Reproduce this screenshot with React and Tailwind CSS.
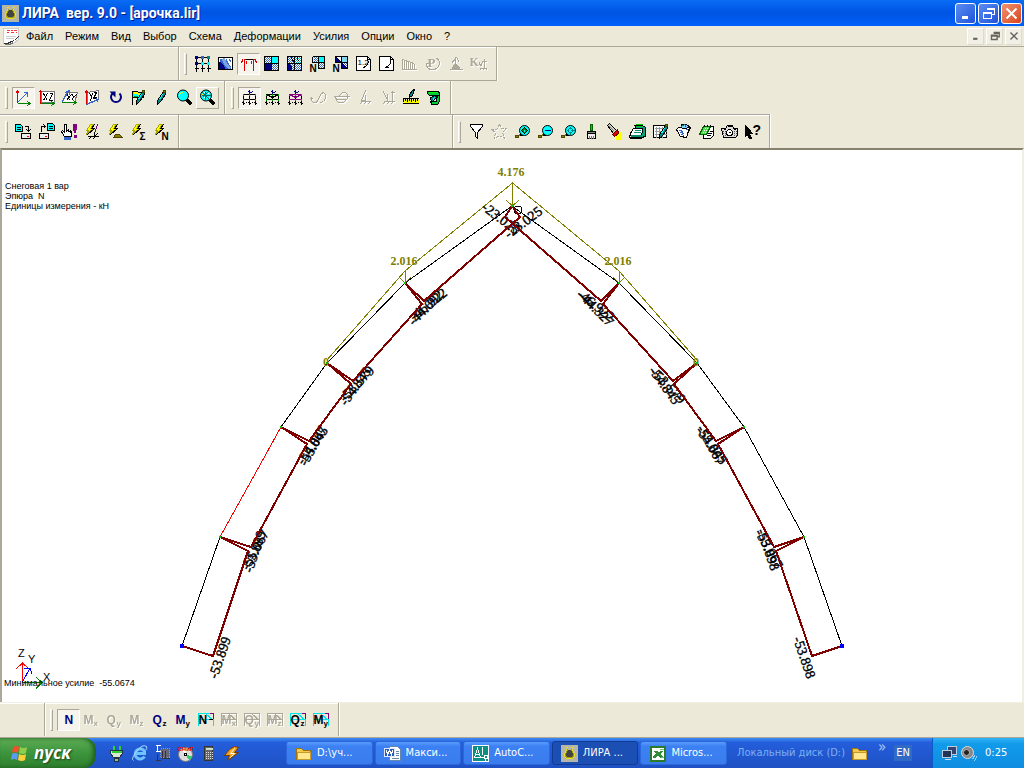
import React, { useState } from "react";

const MENU = ["Файл", "Режим", "Вид", "Выбор", "Схема", "Деформации", "Усилия", "Опции", "Окно", "?"];

const LEFT_NODES = [[512, 206], [405, 283], [327, 363], [281, 427], [220, 537], [182, 646]];
const RIGHT_NODES = [[512, 206], [619, 283], [697, 363], [744, 427], [804, 537], [842, 646]];

const FORCES = [
  { text: "-23.025", x: 498, y: 222, angle: 37 },
  { text: "-23.025", x: 526, y: 226, angle: -37 },
  { text: "-46.922", x: 431, y: 308, angle: -38 },
  { text: "-44.692", x: 429, y: 311, angle: -45 },
  { text: "-53.579", x: 360, y: 387, angle: -46 },
  { text: "-54.845", x: 359, y: 389, angle: -54 },
  { text: "-54.845", x: 316, y: 448, angle: -54 },
  { text: "-55.067", x: 317, y: 448, angle: -61 },
  { text: "-55.067", x: 259, y: 552, angle: -61 },
  { text: "-53.899", x: 259, y: 553, angle: -71 },
  { text: "-53.899", x: 224, y: 659, angle: -71 },
  { text: "-46.922", x: 593, y: 309, angle: 38 },
  { text: "-44.327", x: 593, y: 312, angle: 45 },
  { text: "-53.579", x: 665, y: 389, angle: 46 },
  { text: "-54.845", x: 661, y: 388, angle: 54 },
  { text: "-54.845", x: 708, y: 448, angle: 54 },
  { text: "-55.067", x: 707, y: 447, angle: 61 },
  { text: "-55.067", x: 765, y: 551, angle: 61 },
  { text: "-53.898", x: 764, y: 551, angle: 71 },
  { text: "-53.898", x: 800, y: 659, angle: 71 },
];

// strokes run on whole numbers, the view box is shifted to hit pixel centres
function Svg({ children, size = 17, className = "" }) {
  return (
    <svg
      width={size}
      height={size}
      viewBox="-.5 -.5 17 17"
      fill="none"
      stroke="#000"
      shapeRendering="crispEdges"
      className={`shrink-0 ${className}`}
      aria-hidden="true"
    >
      {children}
    </svg>
  );
}

function Letters({ x, y, size = 10, fill = "#000", children }) {
  return (
    <text x={x} y={y} fontSize={size} fill={fill} stroke="none" fontWeight="bold" fontFamily="Liberation Sans, sans-serif">
      {children}
    </text>
  );
}

const Bolt = () => (
  <g>
    <path d="M6 1h3L6 5h3L2 11l2-4H2z" fill="#ff0" stroke="#a8a800" />
    <path d="M10 1L7 5h3L3 11" />
  </g>
);

const Frame = ({ top = "#008", beam = "#000" }) => (
  <g>
    <path d="M2 5v10M8 5v10M14 5v10M1 14h2M7 14h2M13 14h2M0 13h1M4 13h1M6 13h1M10 13h1M12 13h1M16 13h1" />
    <path d="M2 5h12M2 10h12" stroke={beam} />
    <path d="M8 0v4M6 2h1M10 2h1M7 3h3" stroke={top} />
    <path d="M2 4v2M8 4v2M14 4v2M2 9v2M8 9v2M14 9v2" stroke="#0a0" />
  </g>
);

const Hatch = ({ x, y, w = 7, h = 7, color = "#3a6fc4" }) => (
  <g>
    <rect x={x} y={y} width={w} height={h} fill="#fff" stroke="none" />
    <path
      d={`M${x} ${y + 1}h${w}M${x} ${y + 3}h${w}M${x} ${y + 5}h${w}`}
      stroke={color}
      strokeDasharray="1 1"
    />
    <path d={`M${x + 1} ${y + 2}h${w - 1}M${x + 1} ${y + 4}h${w - 1}M${x + 1} ${y + 6}h${w - 1}`} stroke={color} strokeDasharray="1 1" />
  </g>
);

const Lens = ({ children }) => (
  <g>
    <path d="M10 10l5 5" stroke="#000" strokeWidth="3" />
    <circle cx="6.5" cy="6" r="5.5" fill="#0ff" stroke="#000" shapeRendering="auto" />
    <path d="M3 6q0-3 3-3" stroke="#ff0" />
    {children}
  </g>
);

const ZoomLens = ({ children }) => (
  <g>
    <path d="M6 11l-3 2" stroke="#808000" strokeWidth="2" />
    <path d="M1 12h3v2H1z" fill="#808000" stroke="#554400" />
    <circle cx="10" cy="7" r="5" fill="#0ff" stroke="#000" shapeRendering="auto" />
    <path d="M6 10v2h2" />
    {children}
  </g>
);

const Pen = ({ x = 0 }) => (
  <g transform={`translate(${x} 0)`}>
    <path d="M10 2h2v3L7 12l-3 3v-4z" fill="#088" />
    <path d="M9 5L6 10" stroke="#0ff" />
    <path d="M10 1h2v2h-2z" fill="#808000" stroke="#440" />
  </g>
);

const ICONS = {
  scheme: (
    <g>
      <path d="M2 2v14M8 2v14M14 2v14M2 2h12M2 8h12M0 13h4M6 13h4M12 13h4" />
      <path d="M1 1h2v2H1zM1 7h2v2H1z" stroke="#008" fill="#008" />
      <path d="M7 1h2v2H7z" stroke="#36c" fill="#36c" />
      <path d="M13 1h2v2h-2z" stroke="#088" fill="#088" />
      <path d="M7 7h2v2H7zM13 7h2v2h-2z" stroke="#0ff" fill="#0ff" />
    </g>
  ),
  iso: (
    <g>
      <rect x="1" y="2" width="14" height="12" fill="#fff" />
      <path d="M2 3h4l8 10H2z" fill="#36c" stroke="none" />
      <path d="M6 3q1 6 7 10" stroke="#7aa5e0" strokeWidth="3" />
      <path d="M2 7q4 1 5 6H2z" fill="#000080" stroke="#000080" />
      <path d="M9 3q0 5 5 9M12 3q0 2 2 4" stroke="#36c" />
      <rect x="1" y="2" width="14" height="12" />
    </g>
  ),
  epure: (
    <g>
      <path d="M5 4h7" />
      <path d="M2 3v3M15 3v3M3 4h2M12 4h2M4 4v11M13 4v11M6 5v3M11 5v3M1 5v2M16 5v2" stroke="#e00000" />
    </g>
  ),
  mosaic: (
    <g>
      <Hatch x={1} y={1} />
      <rect x="8" y="1" width="7" height="7" fill="#0ff" stroke="none" />
      <Hatch x={8} y={8} />
      <rect x="1" y="8" width="7" height="7" fill="#000080" stroke="none" />
      <path d="M1 1h14v14H1zM8 1v14M1 8h14" />
    </g>
  ),
  mosaicIso: (
    <g>
      <Hatch x={1} y={1} />
      <Hatch x={8} y={1} color="#0bb" />
      <Hatch x={8} y={8} />
      <Hatch x={1} y={8} />
      <path d="M1 8q5 1 5 7H1z" fill="#000080" stroke="none" />
      <path d="M1 1h14v14H1zM8 1v14M1 8h14M5 1q0 4 3 5M11 1q0 4 1 5" />
    </g>
  ),
  mosaicN: (
    <g>
      <Hatch x={4} y={1} w={6} h={6} />
      <rect x="9" y="1" width="6" height="6" fill="#0ff" stroke="none" />
      <Hatch x={9} y={7} w={6} h={6} />
      <path d="M3 1h12v12H9M3 1v6h12M9 1v12" />
      <Letters x={0} y={16}>N</Letters>
    </g>
  ),
  isoN: (
    <g>
      <rect x="3" y="1" width="6" height="6" fill="#000080" stroke="none" />
      <path d="M3 1h6v6z" fill="#fff" stroke="none" />
      <rect x="9" y="1" width="6" height="6" fill="#7fd7f0" stroke="none" />
      <Hatch x={9} y={7} w={6} h={6} />
      <path d="M9 7v6h6z" fill="#000080" stroke="none" />
      <path d="M3 1h12v12H9M3 1v6h12M9 1v12M3 1l6 6" />
      <Letters x={0} y={16}>N</Letters>
    </g>
  ),
  sheetNum: (
    <g>
      <path d="M1 1h11l3 3v11H1z" fill="#fff" />
      <path d="M12 4q2 4-2 7l-2 1M12 1v3h3" />
      <text x="2" y="9" fontSize="8" fill="#000" stroke="none" fontFamily="Liberation Sans, sans-serif">1.2</text>
    </g>
  ),
  sheet: (
    <g>
      <path d="M1 1h11l3 3v11H1z" fill="#fff" />
      <path d="M12 4q2 5-5 8M12 1v3h3M7 12h3" />
    </g>
  ),
  bars: <path d="M1 3v11h14M3 4v10M5 5v9M7 6v8M9 7v7M11 7v7M13 8v6M1 4l12 4" stroke="#aca899" />,
  rotP: (
    <g stroke="#aca899">
      <path d="M2 8q0 6 6 6t7-6q0-4-3-5M1 8h3l2 2" />
      <text x="3" y="11" fontSize="13" fill="#aca899" stroke="none" fontWeight="bold" fontFamily="Liberation Serif, serif">P</text>
    </g>
  ),
  scaleForce: (
    <g stroke="#aca899">
      <path d="M4 8l5-6 3 5M8 1v6M2 14h13" />
      <path d="M5 12l3-4 4 4v2H5z" fill="#aca899" />
    </g>
  ),
  ku: (
    <g stroke="#aca899">
      <text x="-1" y="10" fontSize="12" fill="#aca899" stroke="none" fontWeight="bold" fontFamily="Liberation Serif, serif">K</text>
      <path d="M9 6v3l2 1 1-4M14 3v9M12 6h5M9 13h8M9 15l2-2M12 15l2-2M15 15l2-2" />
    </g>
  ),
  axes: (
    <g>
      <path d="M2 1v12M0 4l2-3 2 3" stroke="#e00000" />
      <path d="M2 13L12 3M8 3h4v4" stroke="#36c" />
      <path d="M2 14h13M12 12l3 2-3 2" stroke="#008000" />
    </g>
  ),
  xz: (
    <g>
      <rect x="3" y="2" width="13" height="11" fill="#fff" stroke="#777" />
      <path d="M2 0v14M0 3l2-2 2 2" stroke="#e00000" />
      <path d="M2 14h14M13 12l3 2-3 2" stroke="#008000" />
      <path d="M5 4l4 7M9 4l-4 7M11 4h3l-3 7h3" />
    </g>
  ),
  xy: (
    <g>
      <path d="M5 3h11l-3 10H1z" fill="#fff" stroke="#777" />
      <path d="M0 13L7 2M4 3l4-2v4" stroke="#36c" />
      <path d="M0 13h15M12 11l3 2-3 2" stroke="#008000" />
      <path d="M6 5l2 6M10 5l-5 6M11 5l1 3 3-3M12 8l-2 3" />
    </g>
  ),
  yz: (
    <g>
      <path d="M3 3l11-2v9L3 14z" fill="#fff" stroke="#777" />
      <path d="M2 1v14M0 4l2-3 2 3" stroke="#e00000" />
      <path d="M2 15l12-5M10 9l4 1-2 3" stroke="#36c" />
      <path d="M5 4l2 3 1-3M7 7l-1 5M9 3h3l-3 6 4-1" />
    </g>
  ),
  rotate: (
    <g stroke="#000080" shapeRendering="auto">
      <path d="M5 4a5 5 0 1 0 7 0" strokeWidth="2" />
      <path d="M2 2h6v6z" fill="#000080" stroke="none" />
    </g>
  ),
  flags: (
    <g>
      <path d="M2 1v14M2 2h4l3 1h4v5l-3 1-3-1H2z" fill="#0ff" />
      <path d="M3 3h3l3 2h3" stroke="#ff0" strokeWidth="2" />
      <path d="M3 7h3l3 1h2" stroke="#0a0" />
      <Pen x={2} />
    </g>
  ),
  pen: <Pen />,
  lens: <Lens />,
  lensNet: (
    <Lens>
      <path d="M3 3l7 7M9 2L3 8M2 6h9M6 2v9" stroke="#066" />
      <path d="M4 3h1M8 4h1M9 8h1M4 8h1" stroke="#fff" />
    </Lens>
  ),
  load1: <Frame />,
  load2: <g><Frame /><path d="M2 5l6 3 6-3" /></g>,
  load3: <g><Frame beam="#800080" /><path d="M2 5l6 3 6-3" stroke="#800080" /></g>,
  wave1: (
    <path d="M1 9v2l2 2h3l5-9 2-1 2 2v4l-2 3-3 1M0 10l1-2 2 2" stroke="#aca899" />
  ),
  wave2: <path d="M0 7h16M2 7l1 4 2 2h5l4-4V5l-2-2H9L5 7M3 10h9" stroke="#aca899" />,
  fix1: <path d="M9 1L5 11h4M9 5v7M4 12h10M3 15l2-2M7 15l2-2M11 15l2-2" stroke="#aca899" />,
  fix2: <path d="M4 2l4 9M8 4v8M13 1v11M11 3h4M4 12h11M3 15l2-2M7 15l2-2M11 15l2-2" stroke="#aca899" />,
  ruler: (
    <g>
      <path d="M10 1l2-1-2 6-3 2v-3z" fill="#088" />
      <path d="M0 10h16v3H0z" fill="#ff0" stroke="none" />
      <path d="M0 9h16M1 9v3M3 9v2M5 9v3M7 9v2M9 9v3M11 9v2M13 9v3M15 9v2" />
      <path d="M0 14h16" />
    </g>
  ),
  palette: (
    <g>
      <path d="M2 2h11l1 2v2H4L2 4z" fill="#0c3" />
      <path d="M12 6h2v6l-2 3H6l-1-3h6z" fill="#0c3" />
      <path d="M3 3h9" stroke="#0f0" />
      <path d="M10 6l-5 2 1 5 5-5z" fill="#088" />
      <path d="M9 8l-2 3" stroke="#0ff" />
    </g>
  ),
  load: (
    <g>
      <path d="M0 1h5l2 2v5H0z" fill="#0ff" />
      <path d="M1 4h4M1 6h4M9 3h4v4M11 6l2 2 2-2" />
      <path d="M6 10h9v5H6z" fill="#eee" />
      <path d="M11 13h2" stroke="red" />
    </g>
  ),
  save: (
    <g>
      <path d="M9 0h5l2 2v5H9z" fill="#0ff" />
      <path d="M10 3h4M10 5h4M3 8V3h4M5 1l2 2-2 2" />
      <path d="M1 10h9v5H1z" fill="#eee" />
      <path d="M6 13h2" stroke="red" />
    </g>
  ),
  hand: (
    <g>
      <path d="M3 1h2v6l5 1v5H3L0 8l1-1 2 2z" fill="#fff" />
      <path d="M5 4v4M7 5v3M9 6v3" />
      <path d="M3 14h6v2H3z" fill="#36c" stroke="#36c" />
      <path d="M12 1h3v4l-1 4h-1l-1-4zM13 12h2v2h-2z" fill="#800080" stroke="#800080" />
    </g>
  ),
  boltFix: (
    <g>
      <Bolt />
      <path d="M13 1l-3 9v3" stroke="#800080" />
      <path d="M3 13h11M4 16l3-3M8 16l3-3M10 8v5l3-3" />
    </g>
  ),
  boltGround: (
    <g>
      <Bolt />
      <path d="M6 14l2-3h4l3 3z" fill="#808000" stroke="#554400" />
    </g>
  ),
  boltSum: <g><Bolt /><Letters x={9} y={16}>Σ</Letters></g>,
  boltN: <g><Bolt /><Letters x={8} y={16}>N</Letters></g>,
  filter: <path d="M2 1h12v2l-5 6v6l-2-2V9L2 3z" fill="#fff" />,
  star: <path d="M8 1l2 4h5l-4 4 2 6-5-3-5 3 1-6-4-3h5z" stroke="#aca899" strokeDasharray="3 1" />,
  zoomIn: <ZoomLens><path d="M10 4l3 3-3 3-3-3z" fill="#080" stroke="#000" /><path d="M10 6v2" stroke="#0ff" /></ZoomLens>,
  zoomOut: <ZoomLens><path d="M7 7h6" stroke="#008" /></ZoomLens>,
  zoomAll: <ZoomLens><circle cx="10" cy="7" r="2" stroke="#008080" /><path d="M10 3v2M10 9v2M6 7h2M12 7h2M10 7h1" stroke="#008080" /></ZoomLens>,
  brush: (
    <g>
      <path d="M7 1h2v6H7z" fill="#0c0" stroke="#060" />
      <path d="M4 8h8v2H4z" fill="#888" />
      <path d="M4 10h8v5H4z" fill="#eee" />
      <path d="M6 12v3M8 12v3M10 12v3" stroke="#777" />
    </g>
  ),
  torch: (
    <g>
      <path d="M9 12l6-4v8H9z" fill="#ff0" stroke="none" />
      <path d="M1 2l2-2 7 7-3 3z" fill="#ccb" />
      <path d="M6 11l5-5 1 4-4 3z" fill="#e00000" stroke="#600" />
      <path d="M3 3l5 5" stroke="#888" />
    </g>
  ),
  book: (
    <g>
      <path d="M5 2h8l3 2v9l-3 1z" fill="#0aa078" />
      <path d="M4 5h9l-1 9H0l1-4z" fill="#fff" />
      <path d="M5 7h6M4 9h7" stroke="#079070" />
      <path d="M1 12h11" stroke="#079070" strokeWidth="2" />
      <path d="M6 1h7M7 3h4" stroke="#0c0" />
      <path d="M0 15h12l4-3" />
    </g>
  ),
  table: (
    <g>
      <path d="M1 2h13v12H1z" fill="#fff" />
      <path d="M2 5h12M2 8h12M2 11h12M4 3v11M7 3v11M10 3v11" stroke="#999" />
      <Pen x={3} />
    </g>
  ),
  papers: (
    <g>
      <path d="M6 1h5l4 3-4 9-7-3z" fill="#8cf" />
      <path d="M3 4l6 1 5-1-3 10-6-1-4-7z" fill="#fff" />
      <path d="M4 7l4 1M5 9l4 1M6 11l3 1M10 6l2 0" stroke="#36c" />
      <path d="M6 3l3-2 2 3" stroke="#088" />
    </g>
  ),
  pad: (
    <g>
      <path d="M7 3h8v9l-3 3H5z" fill="#fff" />
      <path d="M5 3h7l-4 8H1z" fill="#5d5" stroke="#060" />
      <path d="M6 5h4M5 7h4M4 9h4" stroke="#fff" strokeDasharray="1 1" />
      <path d="M6 1v2M9 1v2M12 1v2M11 8h3M9 10h4M8 12h4" />
    </g>
  ),
  camera: (
    <g>
      <path d="M0 5h4l2-3h5l1 3h4v7l-2 2H2z" fill="#ddd" />
      <circle cx="8" cy="9" r="3" fill="#fff" />
      <path d="M7 9h2M2 6h2M12 6h2M6 3h5" />
      <path d="M1 8h3M1 10h3M1 12h3M12 8h3M12 10h3M12 12h3" stroke="#555" strokeDasharray="1 1" />
    </g>
  ),
  help: (
    <g>
      <path d="M1 2v11l2-2 2 4h2l-2-5h3z" fill="#000" />
      <text x="8" y="11" fontSize="14" fill="#000" stroke="none" fontWeight="bold" fontFamily="Liberation Sans, sans-serif">?</text>
    </g>
  ),
};

const VIEW_ROW = ["scheme", "iso", "epure", "mosaic", "mosaicIso", "mosaicN", "isoN", "sheetNum", "sheet", "bars", "rotP", "scaleForce", "ku"];
const PROJECTION_ROW = ["axes", "xz", "xy", "yz", "rotate", "flags", "pen", "lens", "lensNet"];
const LOAD_ROW = ["load1", "load2", "load3", "wave1", "wave2", "fix1", "fix2", "ruler", "palette"];
const FORCE_ROW = ["load", "save", "hand", "boltFix", "boltGround", "boltSum", "boltN"];
const TOOL_ROW = ["filter", "star", "zoomIn", "zoomOut", "zoomAll", "brush", "torch", "book", "table", "papers", "pad", "camera", "help"];
const DISABLED = ["bars", "rotP", "scaleForce", "ku", "wave1", "wave2", "fix1", "fix2", "star"];

const COMPONENTS = [
  { main: "N", sub: "" },
  { main: "M", sub: "x", off: true },
  { main: "Q", sub: "y", off: true },
  { main: "M", sub: "z", off: true },
  { main: "Q", sub: "z" },
  { main: "M", sub: "y" },
  { main: "N", sub: "", framed: true },
  { main: "M", sub: "x", framed: true, off: true },
  { main: "Q", sub: "y", framed: true, off: true },
  { main: "M", sub: "z", framed: true, off: true },
  { main: "Q", sub: "z", framed: true },
  { main: "M", sub: "y", framed: true },
];

function ToolButton({ label, pressed, raised, disabled, onClick, children }) {
  let look = "border-transparent";
  if (pressed) look = "border-t-[#aca899] border-l-[#aca899] border-r-white border-b-white bg-[#f6f4ec]";
  else if (raised) look = "border-t-white border-l-white border-r-[#aca899] border-b-[#aca899]";
  return (
    <button
      type="button"
      aria-label={label}
      aria-pressed={pressed}
      disabled={disabled}
      onClick={onClick}
      className={`flex h-[22px] w-[23px] shrink-0 items-center justify-center border pb-px ${look}`}
    >
      {children}
    </button>
  );
}

function Grip() {
  return <span className="mr-1 h-[22px] w-[3px] shrink-0 border-y border-r border-l border-t-white border-r-[#aca899] border-b-[#aca899] border-l-white" />;
}

function Band({ children, className = "" }) {
  return (
    <div className={`flex shrink-0 items-center border-r border-r-[#aca899] shadow-[1px_0_0_#fff,inset_0_1px_0_#fff] ${className}`}>
      {children}
    </div>
  );
}

function IconBand({ names, pressed, raised, className }) {
  const [active, setActive] = useState(pressed);
  return (
    <Band className={className}>
      <Grip />
      {names.map((name) => {
        const off = DISABLED.includes(name);
        return (
          <ToolButton key={name} label={name} pressed={active === name} raised={raised === name} disabled={off} onClick={() => pressed && setActive(name)}>
            <Svg className={off ? "drop-shadow-[1px_1px_0_#fff]" : ""}>{ICONS[name]}</Svg>
          </ToolButton>
        );
      })}
    </Band>
  );
}

function ComponentBand() {
  const [active, setActive] = useState(0);
  return (
    <Band className="pr-[5px] pl-[5px]">
      <Grip />
      {COMPONENTS.map((item, index) => {
        const base = item.framed ? "#000" : "#000080";
        const color = item.off ? "#aca899" : base;
        return (
          <ToolButton key={index} label={item.main + item.sub} pressed={active === index} disabled={item.off} onClick={() => setActive(index)}>
            <Svg className={item.off ? "drop-shadow-[1px_1px_0_#fff]" : ""}>
              {item.framed && (
                <g stroke={item.off ? "#aca899" : "#00e5e5"}>
                  <path d="M0 14V2h15v12M0 8h15M7 2l8 7" />
                  <path d="M11 2h4v5" stroke={item.off ? "#aca899" : "#800080"} />
                </g>
              )}
              <Letters x={item.sub || item.framed ? 0 : 4} y={12} size={12} fill={color}>{item.main}</Letters>
              <Letters x={10} y={14} size={8} fill={item.off ? "#aca899" : "#000"}>{item.sub}</Letters>
              {item.framed && !item.sub && <path d="M10 8h4" stroke="#000" />}
            </Svg>
          </ToolButton>
        );
      })}
    </Band>
  );
}

function LyreIcon({ size = 17 }) {
  return (
    <Svg size={size}>
      <rect x="0" y="0" width="16" height="16" fill="#b5b5a8" stroke="#b5b5a8" />
      <path d="M5 4h6l1 7-2 2H6l-2-2z" fill="#444" stroke="none" />
      <path d="M4 2h2M10 2h2M5 3v2L3 8v3l2 2h6l2-2V8l-2-3V3" stroke="#e8e020" />
      <path d="M6 3v2L4 8v3l2 1h4l2-1V8l-2-3V3" stroke="#a09a10" />
    </Svg>
  );
}

function DocumentIcon() {
  return (
    <Svg>
      <path d="M0 0h15v11l-5 4H0z" fill="#fff" stroke="#ccc" />
      <path d="M3 2h3M7 2h2M10 2h3M3 4h2M7 4h3M12 4h1" stroke="#f33" />
      <path d="M2 8h10M2 10h8" stroke="#ccc" />
      <path d="M0 15h4l4-2 3-1 4-4" stroke="#333" />
      <path d="M1 16h5l4-2" stroke="#777" />
    </Svg>
  );
}

function FolderIcon() {
  return (
    <Svg>
      <path d="M1 3h5l2 2h7v9H1z" fill="#f3c94b" stroke="#9c7413" />
      <path d="M2 7h13v7H2z" fill="#ffe88d" stroke="#c79a2c" />
    </Svg>
  );
}

const GLYPHS = {
  min: <path d="M4 12h6" strokeWidth="3" />,
  restore: <path d="M6 3h8v6h-3M3 7h8v6H3zM6 4h8M3 8h8" />,
  close: <path d="M3 3l10 10M13 3L3 13" strokeWidth="2" shapeRendering="auto" />,
};

function TitleBar() {
  return (
    <header className="flex h-[26px] shrink-0 items-center bg-linear-to-b from-[#0a6cf5] via-[#0054e3] to-[#0061fb] pr-[2px] pl-[2px]">
      <LyreIcon />
      <h1 className="ml-[3px] flex-1 whitespace-pre font-[Roboto,sans-serif] text-[14px] leading-4 font-bold text-white [text-shadow:1px_1px_0_#0a1883]">ЛИРА  вер. 9.0 - [арочка.lir]</h1>
      <div className="flex gap-[2px]">
        {["min", "restore", "close"].map((name) => (
          <button
            key={name}
            type="button"
            aria-label={name}
            className={`flex h-[21px] w-[21px] items-center justify-center rounded-[3px] border border-white ${name === "close" ? "bg-linear-to-br from-[#f0936f] to-[#d8400f]" : "bg-linear-to-br from-[#5c8cf2] to-[#1f52d8]"}`}
          >
            <svg width="17" height="17" viewBox="-.5 -.5 17 17" fill="none" stroke="#fff" shapeRendering="crispEdges">{GLYPHS[name]}</svg>
          </button>
        ))}
      </div>
    </header>
  );
}

function MenuBar() {
  return (
    <nav className="flex h-[21px] shrink-0 items-center border-b border-[#aca899] pr-[2px] pl-[3px]">
      <DocumentIcon />
      <div className="flex flex-1">
        {MENU.map((item) => (
          <button key={item} type="button" className="px-[6px] font-['Liberation_Sans',sans-serif] text-[11px] leading-4">{item}</button>
        ))}
      </div>
      <div className="flex gap-[2px]">
        {["min", "restore", "close"].map((name) => (
          <button key={name} type="button" aria-label={`document ${name}`} className="flex h-[17px] w-[17px] items-center justify-center border border-t-white border-r-[#dedbcd] border-b-[#dedbcd] border-l-white bg-[#f1efe6]">
            <svg width="12" height="12" viewBox="-.5 -.5 17 17" fill="none" stroke="#66645a" strokeWidth="2">{GLYPHS[name]}</svg>
          </button>
        ))}
      </div>
    </nav>
  );
}

function Diagram() {
  const points = (list) => list.map((p) => p.join(",")).join(" ");
  return (
    <svg viewBox="2 150 1020 552" className="h-full w-full" fill="none" role="img" aria-label="Эпюра N">
      <g shapeRendering="crispEdges">
        <polyline points={points(LEFT_NODES.slice(0, 4))} stroke="#000" />
        <polyline points={points(LEFT_NODES.slice(3, 5))} stroke="#f00" />
        <polyline points={points(LEFT_NODES.slice(4))} stroke="#000" />
        <polyline points={points(RIGHT_NODES)} stroke="#000" />
        <g stroke="#808000">
          <path d="M327 360L405 271L512.5 183L619 271L697 360" />
          <path d="M512.5 183v23M506 200l6.500 6l6.500-6M405.500 271v12M399 277l6 6l6-6M619.500 271v12M613 277l6 6l6-6" />
        </g>
        <circle cx="518" cy="210" r="4" stroke="#000" />
      </g>
      <g fontFamily="Liberation Serif, serif" fontSize="14" fill="#000" stroke="#000" strokeWidth=".4" textAnchor="middle">
        {FORCES.map((f, i) => (
          <text key={i} transform={`translate(${f.x} ${f.y}) rotate(${f.angle})`}>{f.text}</text>
        ))}
      </g>
      <g stroke="#800000" strokeWidth="2" strokeLinejoin="bevel" shapeRendering="crispEdges">
        <path d="M512 206L520 217L424 301L405 283L422 304L353 381L327 363L351 384L309 441L281 427L307 444L251 547L220 537L248 551L213 656L182 646" />
        <path d="M512 206L505 217L601 301L619 283L603 304L673 381L697 363L674 384L716 441L744 427L718 444L774 547L804 537L776 551L812 656L842 646" />
      </g>
      {[...LEFT_NODES, ...RIGHT_NODES].map(([x, y], i) => (
        i % 6 === 5
          ? <rect key={i} x={x - 2} y={y - 2} width="4" height="4" fill="#00f" />
          : <rect key={i} x={x - 1} y={y - 1} width="2" height="2" fill="#0c0" />
      ))}
      <g fontFamily="Liberation Serif, serif" fontWeight="bold" fontSize="12" fill="#808000" textAnchor="middle">
        <text x="511" y="176">4.176</text>
        <text x="404" y="265">2.016</text>
        <text x="618" y="265">2.016</text>
        <text x="326" y="366">0</text>
        <text x="696" y="366">0</text>
      </g>
      <g shapeRendering="crispEdges">
        <path d="M22.500 683v-20M16 669l6.500-6l6.500 6" stroke="#f00" />
        <path d="M22 683L30 668M24 669l6-1l2 6" stroke="#00f" />
        <path d="M22 682.500h20M36 677l6 5.500l-6 6" stroke="#008000" />
      </g>
      <g fontFamily="Liberation Sans, sans-serif" fontSize="11" fill="#000">
        <text x="18" y="657">Z</text>
        <text x="28" y="663">Y</text>
        <text x="43" y="681">X</text>
      </g>
    </svg>
  );
}

function Canvas() {
  return (
    <main className="relative min-h-0 flex-1 border-t-2 border-r-2 border-l-2 border-t-[#85826f] border-r-[#f1efe2] border-l-[#aca899] bg-white">
      <Diagram />
      <div className="absolute top-[31px] left-[3px] font-['Liberation_Sans',sans-serif] text-[9px] leading-[10px]">
        <p>Снеговая 1 вар</p>
        <p className="whitespace-pre">Эпюра  N</p>
        <p>Единицы измерения - кН</p>
      </div>
      <p className="absolute bottom-[14px] left-[2px] whitespace-pre font-['Liberation_Sans',sans-serif] text-[9px] leading-[10px]">Минимальное усилие  -55.0674</p>
    </main>
  );
}

const QUICK = {
  plug: (
    <g>
      <path d="M5 0v4M11 0v4" stroke="#3c3" strokeWidth="2" />
      <path d="M2 5h12v3l-3 4H5L2 8z" fill="#d8e8d0" stroke="#234" />
      <path d="M3 6h10" stroke="#3c3" strokeWidth="2" />
      <path d="M6 13h4v3H6z" fill="#9b9" stroke="#234" />
    </g>
  ),
  ie: (
    <g shapeRendering="auto">
      <path d="M13 11a5 5 0 1 1 0-5v2H4" stroke="#6fc3ff" strokeWidth="3" />
      <path d="M2 15Q-1 14 5 6T15 1q1 2-1 4" stroke="#a8dcff" />
    </g>
  ),
  beam: (
    <g>
      <path d="M1 0h5M3 0v6M1 6h14" stroke="#fff" />
      <path d="M6 3h9v9H6z" fill="#667" stroke="#99a" strokeDasharray="1 1" />
      <path d="M3 8v7M1 15h5M6 13h9M8 5v7M11 5v7" stroke="#334" />
    </g>
  ),
  disc: (
    <g>
      <circle cx="8" cy="9" r="7" fill="#ddd" stroke="#777" shapeRendering="auto" />
      <path d="M8 9L3 4h6z" fill="#fff" stroke="none" />
      <path d="M8 9l6 2-2 4z" fill="#3c6" stroke="none" />
      <circle cx="8" cy="9" r="1" fill="#fff" />
      <text x="0" y="5" fontSize="6" fill="#f00" stroke="none" fontWeight="bold" fontFamily="Liberation Sans, sans-serif">СНиП</text>
    </g>
  ),
  calc: (
    <g>
      <path d="M4 1h8v14H4z" fill="#666" stroke="#333" />
      <path d="M5 3h7" stroke="#cdc" strokeWidth="2" />
      <path d="M5 7h7M5 9h7M5 11h7M5 13h7" stroke="#ddd" strokeDasharray="1 1" />
    </g>
  ),
  winamp: (
    <g shapeRendering="auto">
      <path d="M11 1l4 1-4 5h4L4 15l2-5H1l5-6z" fill="#f7a21b" stroke="#743c00" />
      <path d="M11 3L7 8h4l-4 4" stroke="#fff" />
    </g>
  ),
};

const TASK_ICONS = {
  folder: <FolderIcon />,
  word: (
    <Svg>
      <path d="M5 1h8l3 3v11H5z" fill="#fff" stroke="#68a" />
      <path d="M11 6h3M11 8h3M11 10h3M7 13h7" stroke="#68a" />
      <path d="M0 3h10v8H0z" fill="#2a5db8" stroke="#dde8ff" />
      <path d="M2 5l1 4 2-4 2 4 1-4" stroke="#fff" />
    </Svg>
  ),
  acad: (
    <Svg>
      <path d="M0 0h16v16H0z" fill="#0f8f84" stroke="#fff" />
      <path d="M2 12L5 3l3 9M3 9h4M10 1v8M1 12h9M12 10h3v3h-3zM10 12h2M13 13v3" stroke="#fff" />
    </Svg>
  ),
  lira: <LyreIcon />,
  excel: (
    <Svg>
      <path d="M1 1h14v14H1z" fill="#fff" stroke="#2c7a2c" strokeWidth="2" />
      <path d="M3 5h4l2 2 2-2h3l-3 3 3 4h-4l-2-2-2 2H3l3-4z" fill="#2f8b35" stroke="none" />
      <path d="M10 4h4M11 12h3" stroke="#7b7" />
    </Svg>
  ),
};

const TASKS = [
  { icon: "folder", text: "D:\\уч..." },
  { icon: "word", text: "Макси..." },
  { icon: "acad", text: "AutoC..." },
  { icon: "lira", text: "ЛИРА  ...", active: true },
  { icon: "excel", text: "Micros..." },
];

function Taskbar() {
  return (
    <footer className="flex h-[30px] shrink-0 items-stretch bg-linear-to-b from-[#3f8cf3] via-[#245edc] via-15% to-[#1e50c2] text-[11px] text-white">
      <button type="button" className="flex w-24 items-center gap-1 rounded-r-xl bg-linear-to-b from-[#5eac56] via-[#3c953c] to-[#2f7f2f] pl-[10px] shadow-[inset_-3px_0_4px_#1d5e1d]">
        <svg width="20" height="20" viewBox="0 0 20 20" aria-hidden="true">
          <path d="M3 4q3-2 6 0L8 10q-3-2-6 0z" fill="#f0512a" />
          <path d="M10 4q4 2 7 0l-1 6q-3 2-7 0z" fill="#8bd048" />
          <path d="M2 11q3-2 6 0l-1 6q-3-2-6 0z" fill="#5c9bf2" />
          <path d="M9 11q4 2 7 0l-1 6q-3 2-7 0z" fill="#fbd03c" />
        </svg>
        <span className="font-['Open_Sans',sans-serif] text-[17px] leading-5 font-bold italic [text-shadow:1px_1px_2px_#144414]">пуск</span>
      </button>
      <div className="ml-3 flex w-[178px] items-center gap-[6px]">
        {Object.keys(QUICK).map((name) => (
          <button key={name} type="button" aria-label={name}><Svg>{QUICK[name]}</Svg></button>
        ))}
      </div>
      <div className="flex flex-1 items-center gap-[2px]">
        {TASKS.map((task) => (
          <button
            key={task.icon}
            type="button"
            className={`flex h-[24px] max-w-[160px] min-w-0 flex-1 items-center gap-[5px] rounded-[3px] border pl-[8px] whitespace-pre ${task.active ? "border-[#123c93] bg-[#1b4fb4]" : "border-[#2b68dc] bg-linear-to-b from-[#5a9bfb] via-[#3c81f3] via-20% to-[#3a7cee]"}`}
          >
            {TASK_ICONS[task.icon]}
            <span className="truncate">{task.text}</span>
          </button>
        ))}
      </div>
      <div className="ml-[10px] flex w-[195px] items-center">
        <span className="whitespace-nowrap text-[#7eb0f2]">Локальный диск (D:)</span>
        <span className="ml-[6px]"><FolderIcon /></span>
        <button type="button" aria-label="more" className="ml-[10px] self-start text-[15px] leading-[18px] text-[#a8cdfa]">»</button>
        <span className="ml-2 bg-[#316ac5] px-[2px] leading-4">EN</span>
      </div>
      <div className="flex w-[92px] shrink-0 items-center gap-[2px] border-l border-[#0a5bc9] bg-linear-to-b from-[#2fb4f5] via-[#129bea] via-20% to-[#0f8de0] pl-2">
        <Svg>
          <path d="M6 1h9v8H6z" fill="#347" stroke="#bcd" />
          <path d="M1 5h9v7H1z" fill="#235" stroke="#bcd" />
          <path d="M3 14h6M11 11h4" stroke="#cde" />
        </Svg>
        <Svg>
          <circle cx="7" cy="7" r="6" fill="#888" stroke="#ddd" shapeRendering="auto" />
          <circle cx="6" cy="7" r="3" fill="#222" stroke="#bbb" shapeRendering="auto" />
          <path d="M12 14l2-4M14 16l2-5" stroke="#9cf" />
        </Svg>
        <time className="ml-[6px]">0:25</time>
      </div>
    </footer>
  );
}

export default function App() {
  return (
    <div className="flex h-screen flex-col overflow-hidden bg-[#ece9d8] font-['DejaVu_Sans_Condensed','DejaVu_Sans',sans-serif] text-black">
      <TitleBar />
      <MenuBar />
      <div className="flex h-[34px] shrink-0">
        <Band className="w-[179px] border-b border-b-[#aca899]" />
        <IconBand names={VIEW_ROW} pressed="epure" className="border-b border-b-[#aca899] pr-[6px] pl-[5px]" />
      </div>
      <div className="flex h-[33px] shrink-0">
        <IconBand names={PROJECTION_ROW} pressed="axes" raised="lensNet" className="pr-[5px] pl-[5px]" />
        <IconBand names={LOAD_ROW} pressed="load1" className="pr-[5px] pl-[6px]" />
      </div>
      <div className="flex h-[34px] shrink-0">
        <IconBand names={FORCE_ROW} className="border-t border-t-[#aca899] pr-[5px] pl-[5px]" />
        <Band className="w-[274px] border-t border-t-[#aca899]" />
        <IconBand names={TOOL_ROW} className="border-t border-t-[#aca899] pr-[5px] pl-[5px]" />
      </div>
      <Canvas />
      <div className="flex h-[36px] shrink-0 border-t border-b border-t-[#f1efe2] border-b-[#aca899] pb-px">
        <Band className="w-[45px]" />
        <ComponentBand />
      </div>
      <Taskbar />
    </div>
  );
}
